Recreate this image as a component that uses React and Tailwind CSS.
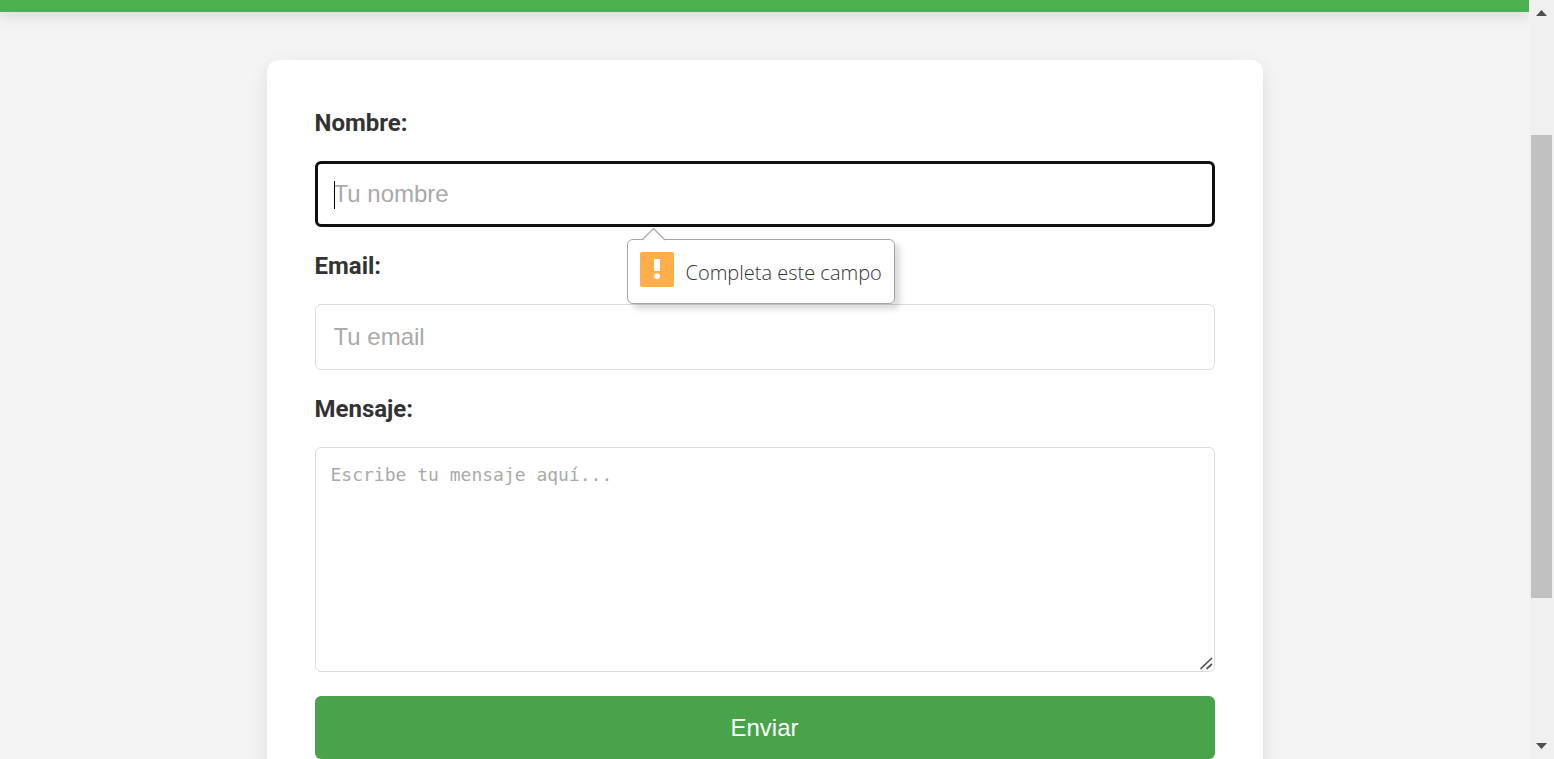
const labelClass =
  "font-['Roboto',sans-serif] text-2xl font-bold leading-[31px] text-[#333333]";
const fieldClass = "flex flex-col gap-[22px]";
const inputClass =
  "block h-[66px] w-full rounded-md bg-white font-['Liberation_Sans',Arial,sans-serif] text-2xl text-[#333333] placeholder:text-[#a9a9a9] outline-none";

function ValidationBubble({ text }) {
  return (
    <div
      role="alert"
      className="absolute left-[312px] top-[78px] z-10 flex h-[65px] items-center gap-3 rounded-md border border-[#a5a5a5] bg-white px-3 shadow-[5px_5px_6px_rgba(0,0,0,0.15)]"
    >
      <svg
        className="absolute -top-3 left-3"
        width="28"
        height="13"
        viewBox="0 0 28 13"
        aria-hidden="true"
      >
        <path d="M1.5 13 L13.5 0.5 L25.5 13 Z" fill="#fff" />
        <path d="M2 12 L13.5 0.5 L25 12" fill="none" stroke="#a5a5a5" strokeWidth="1.2" />
      </svg>
      <svg className="mb-1 shrink-0" width="34" height="35" viewBox="0 0 34 35" aria-hidden="true">
        <rect width="34" height="35" rx="2" fill="#ffae4a" />
        <path d="M14 7h6v12h-6z" fill="#fff" />
        <circle cx="17" cy="24.3" r="3" fill="#fff" />
      </svg>
      <span className="whitespace-nowrap pt-0.5 font-['Open_Sans','Noto_Sans',sans-serif] text-xl font-light text-[#333333]">
        {text}
      </span>
    </div>
  );
}

function Scrollbar() {
  return (
    <div className="flex w-[25px] shrink-0 flex-col bg-[#f0f0f0] px-0.5" aria-hidden="true">
      <div className="flex h-[25px] items-center justify-center">
        <svg width="11" height="6" viewBox="0 0 11 6">
          <path d="M0 6 L5.5 0 L11 6 Z" fill="#505050" />
        </svg>
      </div>
      <div className="flex-[110]" />
      <div className="flex-[463] bg-[#c1c1c1]" />
      <div className="flex-[135]" />
      <div className="flex h-[26px] items-center justify-center">
        <svg width="11" height="6" viewBox="0 0 11 6">
          <path d="M0 0 L5.5 6 L11 0 Z" fill="#505050" />
        </svg>
      </div>
    </div>
  );
}

export default function App() {
  return (
    <div className="flex h-screen overflow-hidden bg-[#f4f4f4]">
      <div className="min-w-0 flex-1 overflow-hidden">
        <header className="h-3 bg-[#4caf50] shadow-[0_6px_12px_rgba(0,0,0,0.1)]" />
        <main className="px-6 pt-12">
          <form
            noValidate
            className="mx-auto flex max-w-[996px] flex-col gap-6 rounded-xl bg-white p-12 shadow-[0_6px_18px_rgba(0,0,0,0.1)]"
          >
            <div className={fieldClass}>
              <label htmlFor="nombre" className={labelClass}>
                Nombre:
              </label>
              <div className="relative">
                <input
                  id="nombre"
                  type="text"
                  required
                  placeholder="Tu nombre"
                  className={`${inputClass} border-[3px] border-[#101010] px-4`}
                />
                <span className="absolute left-[19px] top-5 h-7 w-px bg-black" aria-hidden="true" />
                <ValidationBubble text="Completa este campo" />
              </div>
            </div>
            <div className={fieldClass}>
              <label htmlFor="email" className={labelClass}>
                Email:
              </label>
              <input
                id="email"
                type="email"
                required
                placeholder="Tu email"
                className={`${inputClass} border border-[#dddddd] px-[18px]`}
              />
            </div>
            <div className={fieldClass}>
              <label htmlFor="mensaje" className={labelClass}>
                Mensaje:
              </label>
              <div className="relative">
                <textarea
                  id="mensaje"
                  required
                  placeholder="Escribe tu mensaje aquí..."
                  className="block h-[225px] w-full resize-none rounded-md border border-[#dddddd] bg-white px-[15px] py-4 font-['DejaVu_Sans_Mono',monospace] text-lg leading-[22px] text-[#333333] outline-none placeholder:text-[#a9a9a9]"
                />
                <svg
                  className="absolute bottom-0.5 right-0.5"
                  width="13"
                  height="13"
                  viewBox="0 0 13 13"
                  aria-hidden="true"
                >
                  <path
                    d="M0.5 12 L12 1 M6.5 12 L12 7"
                    stroke="#55555a"
                    strokeWidth="1.7"
                    fill="none"
                  />
                </svg>
              </div>
            </div>
            <button
              type="submit"
              className="h-[63px] w-full rounded-md bg-[#48a34b] font-['Liberation_Sans',Arial,sans-serif] text-2xl text-white"
            >
              Enviar
            </button>
          </form>
        </main>
      </div>
      <Scrollbar />
    </div>
  );
}
